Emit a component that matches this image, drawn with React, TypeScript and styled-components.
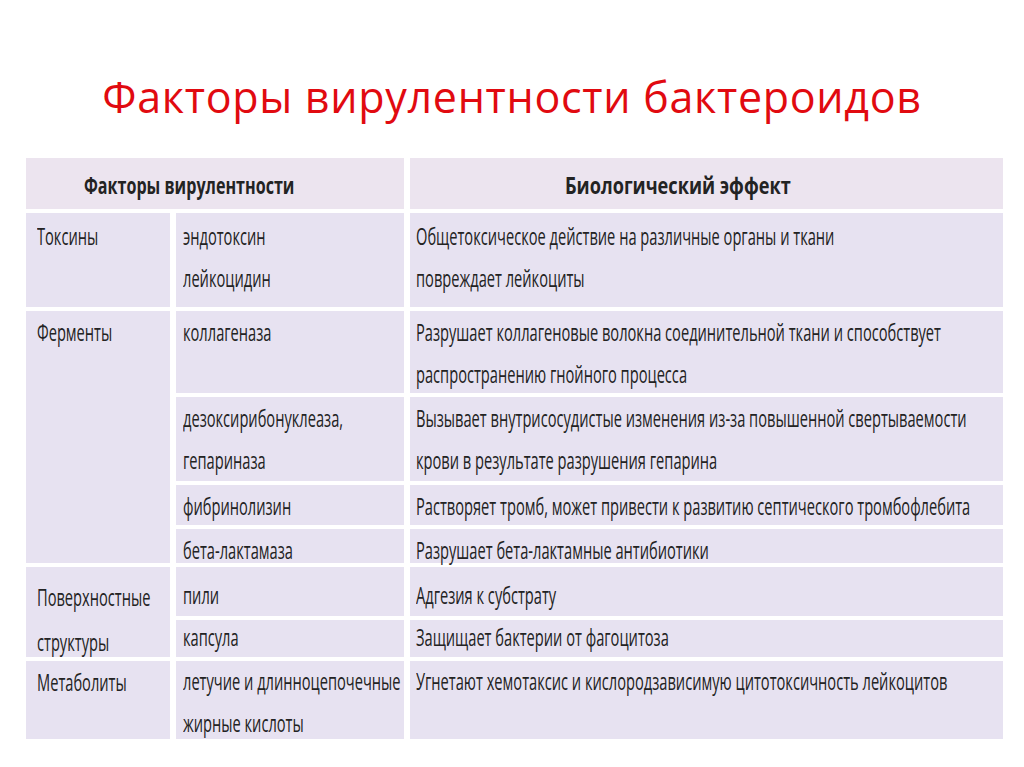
import React from "react"
import styled, { createGlobalStyle } from "styled-components"

const GlobalStyle = createGlobalStyle`
	html, body {
		margin: 0;
		padding: 0;
		background: #ffffff;
	}
	body {
		width: 1024px;
		height: 767px;
		overflow: hidden;
	}
`

type Row = {
	group?: { name: string[]; span: number; pad: number; lineHeight: number }
	factor: string[]
	effect: string[]
	height: number
	pad: number
}

const ROWS: Array<Row> = [
	{
		group: { name: ["Токсины"], span: 1, pad: 2, lineHeight: 42 },
		factor: ["эндотоксин", "лейкоцидин"],
		effect: ["Общетоксическое действие на различные органы и ткани", "повреждает лейкоциты"],
		height: 94,
		pad: 2
	},
	{
		group: { name: ["Ферменты"], span: 4, pad: 0, lineHeight: 42 },
		factor: ["коллагеназа"],
		effect: [
			"Разрушает коллагеновые волокна соединительной ткани и способствует",
			"распространению гнойного процесса"
		],
		height: 82,
		pad: 0
	},
	{
		factor: ["дезоксирибонуклеаза,", "гепариназа"],
		effect: [
			"Вызывает внутрисосудистые изменения из-за повышенной свертываемости",
			"крови в результате разрушения гепарина"
		],
		height: 84,
		pad: 0
	},
	{
		factor: ["фибринолизин"],
		effect: ["Растворяет тромб, может привести к развитию септического тромбофлебита"],
		height: 40,
		pad: 0
	},
	{
		factor: ["бета-лактамаза"],
		effect: ["Разрушает бета-лактамные антибиотики"],
		height: 34,
		pad: 0
	},
	{
		group: { name: ["Поверхностные", "структуры"], span: 2, pad: 7, lineHeight: 45 },
		factor: ["пили"],
		effect: ["Адгезия к субстрату"],
		height: 49,
		pad: 7
	},
	{
		factor: ["капсула"],
		effect: ["Защищает бактерии от фагоцитоза"],
		height: 37,
		pad: -4
	},
	{
		group: { name: ["Метаболиты"], span: 1, pad: -1, lineHeight: 44 },
		factor: ["летучие и длинноцепочечные", "жирные кислоты"],
		effect: ["Угнетают хемотаксис и кислородзависимую цитотоксичность лейкоцитов"],
		height: 78,
		pad: -1
	}
]

export default function App() {
	const rowHeights = [51, ...ROWS.map(r => r.height)].map(h => `${h}px`).join(" ")
	return (
		<>
			<GlobalStyle />
			<Slide>
				<Title>Факторы вирулентности бактероидов</Title>
				<Table style={{ gridTemplateRows: rowHeights }}>
					<HeaderCell $indent={58} $squeeze={0.7} $wide>
						<Line>Факторы вирулентности</Line>
					</HeaderCell>
					<HeaderCell $indent={155} $squeeze={0.79}>
						<Line>Биологический эффект</Line>
					</HeaderCell>
					{ROWS.map((row, i) => (
						<React.Fragment key={i}>
							{row.group && (
								<GroupCell
									$span={row.group.span}
									$pad={row.group.pad}
									$lineHeight={row.group.lineHeight}
								>
									{row.group.name.map(line => (
										<Line key={line}>{line}</Line>
									))}
								</GroupCell>
							)}
							<FactorCell $pad={row.pad}>
								{row.factor.map(line => (
									<Line key={line}>{line}</Line>
								))}
							</FactorCell>
							<EffectCell $pad={row.pad}>
								{row.effect.map(line => (
									<Line key={line}>{line}</Line>
								))}
							</EffectCell>
						</React.Fragment>
					))}
				</Table>
			</Slide>
		</>
	)
}

const Slide = styled.div`
	width: 1024px;
	height: 767px;
	display: flex;
	flex-direction: column;
	align-items: flex-start;
	padding: 0 0 0 26px;
	box-sizing: border-box;
	background: #ffffff;
	overflow: hidden;
`

const Title = styled.h1`
	margin: 64px 0 0 0;
	width: 972px;
	height: 66px;
	text-align: center;
	font-family: "Open Sans", "Noto Sans", sans-serif;
	font-weight: 400;
	font-size: 43px;
	letter-spacing: 0.7px;
	line-height: 66px;
	color: #e10a10;
`

const Table = styled.div`
	margin-top: 28px;
	display: grid;
	grid-template-columns: 144px 228px 593px;
	column-gap: 6px;
	row-gap: 4px;
	font-family: "Open Sans", "Noto Sans", sans-serif;
	font-size: 24px;
	font-weight: 500;
	line-height: 42px;
	color: #232323;
`

const Cell = styled.div<{ $pad?: number }>`
	background: #e7e2f1;
	box-sizing: border-box;
	white-space: nowrap;
	min-width: 0;
	overflow: visible;

	& > :first-child {
		margin-top: ${p => p.$pad ?? 2}px;
	}
`

// the slide uses a condensed face; squeeze the available one to its width
const Line = styled.div`
	transform: scaleX(0.61);
	transform-origin: left center;
`

const HeaderCell = styled(Cell)<{ $wide?: boolean; $indent: number; $squeeze: number }>`
	grid-column: ${p => (p.$wide ? "1 / span 2" : "3")};
	background: #ece4ef;
	font-weight: bold;
	font-size: 23px;
	line-height: 48px;
	padding: 1px 0 0 ${p => p.$indent}px;

	${Line} {
		transform: scaleX(${p => p.$squeeze});
	}
`

const GroupCell = styled(Cell)<{ $span: number; $lineHeight: number }>`
	grid-column: 1;
	grid-row: span ${p => p.$span};
	padding-left: 11px;
	line-height: ${p => p.$lineHeight}px;
`

const FactorCell = styled(Cell)`
	grid-column: 2;
	padding-left: 7px;
`

const EffectCell = styled(Cell)`
	grid-column: 3;
	padding-left: 6px;
`
